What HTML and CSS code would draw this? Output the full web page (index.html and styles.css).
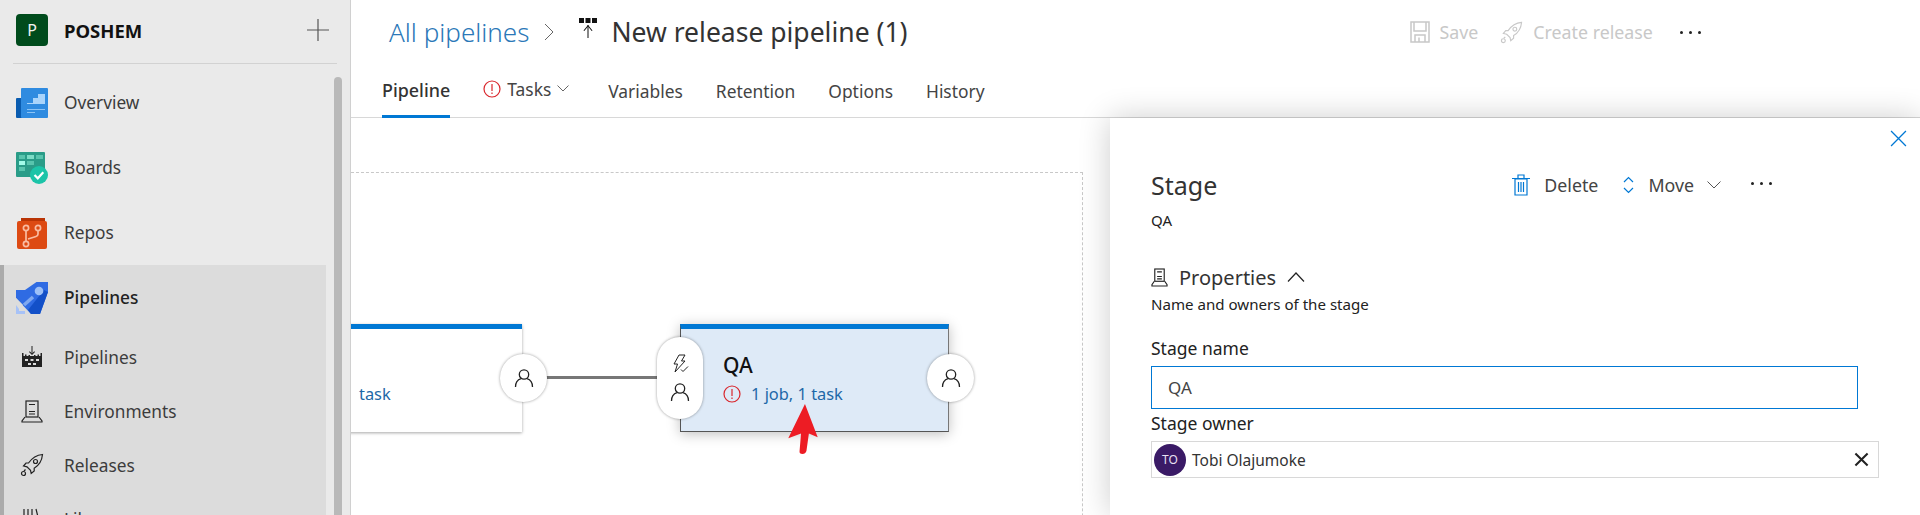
FILE: index.html
```html
<!DOCTYPE html>
<html lang="en">
<head>
<meta charset="utf-8">
<title>New release pipeline (1)</title>
<link rel="stylesheet" href="styles.css">
</head>
<body>
<div class="app">
  <aside class="sidebar">
    <div class="project">
      <span class="project-badge">P</span>
      <span class="project-name">POSHEM</span>
      <svg class="project-add" viewBox="0 0 24 24"><path d="M12 1v22M1 12h22" stroke="#555" stroke-width="1.2" fill="none"/></svg>
    </div>
    <nav class="nav">
      <div class="nav-item">
        <span class="nav-icon">
          <svg viewBox="0 0 32 32" width="32" height="32"><rect x="0" y="11" width="14" height="20" rx="1" fill="#0a5cb0"/><rect x="5" y="1" width="27" height="30" rx="1" fill="#2f8be0"/><path d="M11 16h6v-5h5v-4h7v10H11z" fill="#a9d4fb"/><path d="M11 22h18v1H11zM11 25h8v1h-8z" fill="#8cc4f5"/></svg>
        </span>Overview
      </div>
      <div class="nav-item">
        <span class="nav-icon">
          <svg viewBox="0 0 32 32" width="32" height="32"><rect x="0" y="0" width="29" height="25" rx="1" fill="#2a9c88"/><rect x="3" y="3" width="6" height="4" fill="#58c4ad"/><rect x="11" y="3" width="7" height="4" fill="#7cdcc6"/><rect x="20" y="3" width="7" height="4" fill="#58c4ad"/><rect x="3" y="9" width="6" height="4" fill="#a2fbe8"/><rect x="11" y="9" width="7" height="4" fill="#58c4ad"/><rect x="3" y="15" width="6" height="4" fill="#58c4ad"/><circle cx="23" cy="23" r="9" fill="#1cc4a8"/><path d="M18.5 23l3.3 3.3 5.5-6" stroke="#fff" stroke-width="2.2" fill="none"/></svg>
        </span>Boards
      </div>
      <div class="nav-item">
        <span class="nav-icon">
          <svg viewBox="0 0 32 32" width="32" height="32"><path d="M5 1h24v3H5z" fill="#b93405"/><rect x="1" y="4" width="30" height="28" rx="2" fill="#dd4a13"/><g stroke="#f9bba1" stroke-width="1.7" fill="none"><circle cx="10" cy="11" r="2.6"/><circle cx="22" cy="11" r="2.6"/><circle cx="10" cy="27" r="2.6"/><path d="M10 14v10M22 14v3q0 2-2 2.5l-8 2.5"/></g></svg>
        </span>Repos
      </div>
      <div class="nav-group">
        <div class="nav-item nav-head">
          <span class="nav-icon">
            <svg viewBox="0 0 32 32" width="32" height="32"><path d="M20.500 0H32V10L24 32H15L0 16V8H9z" fill="#2f6be3"/><path d="M32 10L24 32H15L12 28 28 8z" fill="#1350c8"/><circle cx="23" cy="9" r="4.300" fill="#9cc0f7"/><path d="M8 23l9-8" stroke="#7fa8f0" stroke-width="3.500"/><path d="M0 22h3v7h6v3H0z" fill="#a7c2f7"/><path d="M0 16l7 7-4 4-3-4z" fill="#dcdcdc"/></svg>
          </span>Pipelines
        </div>
        <div class="nav-item nav-sub">
          <span class="nav-icon">
            <svg viewBox="0 0 24 24" width="24" height="24"><g fill="#222"><path d="M11.500 1h1v8h-1z"/><path d="M9 7l3 3 3-3-.7-.7L12 8.600 9.700 6.300z"/><path d="M2 8h1.500v3h1.500V9.500h1.500V11H8.500v-1H10v1h4v-1h1.500v1h2V9.500H19V11h1.500V8H22v14H2z"/></g><g fill="#dcdcdc"><rect x="5" y="14" width="3" height="2"/><rect x="10.500" y="14" width="3" height="2"/><rect x="16" y="14" width="3" height="2"/><rect x="8" y="18" width="3" height="2"/><rect x="13" y="18" width="3" height="2"/></g></svg>
          </span>Pipelines
        </div>
        <div class="nav-item nav-sub">
          <span class="nav-icon">
            <svg viewBox="0 0 24 24" width="24" height="24"><g fill="none" stroke="#222" stroke-width="1.200"><rect x="6" y="2" width="12" height="16"/><path d="M9 5.500h6M9 12.500h6M9 15h6"/><path d="M5 18l-3 4v1h20v-1l-3-4"/></g></svg>
          </span>Environments
        </div>
        <div class="nav-item nav-sub">
          <span class="nav-icon">
            <svg viewBox="0 0 24 24" width="24" height="24"><use href="#rocket" stroke="#222"/></svg>
          </span>Releases
        </div>
        <div class="nav-item nav-sub">
          <span class="nav-icon">
            <svg viewBox="0 0 24 24" width="24" height="24"><path d="M4 2v20M8 2v20M12 2v20M16 2l5 20" stroke="#222" stroke-width="1.200" fill="none"/></svg>
          </span>Library
        </div>
      </div>
    </nav>
    <span class="scrollbar"></span>
  </aside>

  <main class="main">
    <header class="topbar">
      <a class="crumb">All pipelines</a>
      <svg class="crumb-sep" viewBox="0 0 10 18"><path d="M1 1l8 8-8 8" stroke="#666" stroke-width="1" fill="none"/></svg>
      <svg class="release-icon" viewBox="0 0 20 20"><g fill="#111"><rect x="1" y="0" width="5" height="5"/><rect x="7.500" y="0" width="5" height="5"/><rect x="14" y="0" width="5" height="5"/><path d="M9.500 7h1v13h-1z"/><path d="M5.500 12.500l4.500-5.500 4.500 5.500-.8.600L10 8.600l-3.700 4.500z"/></g></svg>
      <h1 class="title">New release pipeline (1)</h1>
      <div class="top-actions">
        <span class="top-action">
          <svg viewBox="0 0 20 22" width="20" height="22"><g fill="none" stroke="#c8c8c8" stroke-width="1.500"><path d="M1 1h18v20H1z"/><path d="M4 1v9h12V1M5 21v-7h10v7M9 16.500v4.500"/></g></svg>
          Save
        </span>
        <span class="top-action">
          <svg viewBox="0 0 24 24" width="23" height="23"><use href="#rocket" stroke="#c8c8c8"/></svg>
          Create release
        </span>
        <span class="dots dots-top"><i></i><i></i><i></i></span>
      </div>
    </header>
    <div class="tabs">
      <span class="tab tab-active">Pipeline</span>
      <span class="tab tab-tasks">
        <svg class="err" viewBox="0 0 18 18" width="18" height="18"><use href="#error"/></svg>
        Tasks
        <svg class="tab-chev" viewBox="0 0 12 7" width="12" height="7"><path d="M.5.500L6 6l5.500-5.500" stroke="#666" fill="none"/></svg>
      </span>
      <span class="tab">Variables</span>
      <span class="tab">Retention</span>
      <span class="tab">Options</span>
      <span class="tab">History</span>
    </div>
    <div class="workspace">
      <section class="canvas">
        <div class="canvas-frame"></div>
        <div class="stage stage-dev"><span class="stage-meta">task</span></div>
        <span class="connector"></span>
        <span class="round round-a"><svg viewBox="0 0 20 20" width="20" height="20"><use href="#person"/></svg></span>
        <div class="stage stage-qa">
          <div class="stage-name">QA</div>
          <div class="stage-meta">
            <svg viewBox="0 0 18 18" width="18" height="18"><use href="#error"/></svg>
            1 job, 1 task
          </div>
        </div>
        <span class="pill">
          <svg viewBox="0 0 20 20" width="20" height="20"><path d="M9 1h6l-3.500 6H15L5 18l2.500-8H4z M11 15.500l2 2 5-5" fill="none" stroke="#222" stroke-width="1"/></svg>
          <svg viewBox="0 0 20 20" width="20" height="20"><use href="#person"/></svg>
        </span>
        <span class="round round-b"><svg viewBox="0 0 20 20" width="20" height="20"><use href="#person"/></svg></span>
        <svg class="red-arrow" viewBox="0 0 32 52" width="32" height="52"><path d="M18 0L31 34 22 30 19.500 48q-1 3-4 3-3.500 0-3-3L14 30 1 35z" fill="#ed1c24"/></svg>
      </section>

      <section class="panel">
        <div class="panel-close-row">
          <svg viewBox="0 0 16 16" width="17" height="17"><path d="M1 1l14 14M15 1L1 15" stroke="#0078d4" stroke-width="1.200" fill="none"/></svg>
        </div>
        <div class="panel-head">
          <h2 class="panel-title">Stage</h2>
          <div class="panel-actions">
            <span class="panel-action panel-delete">
              <svg viewBox="0 0 18 22" width="18" height="22"><g fill="none" stroke="#0078d4" stroke-width="1.200"><path d="M3 5h12v16H3zM0 4.500h18M6 4V1h6v3M6.500 8v10M9 8v10M11.500 8v10"/></g></svg>
              Delete
            </span>
            <span class="panel-action">
              <svg viewBox="0 0 11 18" width="11" height="18"><path d="M1 6l4.500-4.500L10 6M1 12l4.500 4.500L10 12" stroke="#0078d4" stroke-width="1.200" fill="none"/></svg>
              Move
              <svg class="move-chev" viewBox="0 0 14 8" width="14" height="8"><path d="M.5.500L7 7l6.500-6.500" stroke="#555" fill="none"/></svg>
            </span>
            <span class="dots dots-panel"><i></i><i></i><i></i></span>
          </div>
        </div>
        <div class="panel-sub">QA</div>
        <div class="section-head">
          <svg viewBox="0 0 18 20" width="17" height="19"><g fill="none" stroke="#222" stroke-width="1.200"><rect x="4" y="1" width="10" height="13"/><path d="M6.500 4h5M6.500 9h5M6.500 11.500h5"/><path d="M3.500 14L1 17.500V19h16v-1.500L14.500 14"/></g></svg>
          <span class="section-title">Properties</span>
          <svg viewBox="0 0 18 10" width="18" height="10"><path d="M1 9.500l8-8.500 8 8.500" stroke="#222" stroke-width="1.200" fill="none"/></svg>
        </div>
        <div class="section-desc">Name and owners of the stage</div>
        <label class="field-label field-name">Stage name</label>
        <div class="text-input">QA</div>
        <label class="field-label">Stage owner</label>
        <div class="owner-box">
          <span class="avatar">TO</span>
          <span class="owner-name">Tobi Olajumoke</span>
          <svg class="owner-x" viewBox="0 0 16 16" width="15" height="15"><path d="M1.500 1.500l13 13M14.500 1.500l-13 13" stroke="#222" stroke-width="2.200" fill="none"/></svg>
        </div>
      </section>
    </div>
  </main>
</div>

<svg class="defs" width="0" height="0">
  <defs>
    <g id="rocket" fill="none" stroke-width="1.200">
      <path d="M22.500 1.500C17 2 12 5 8.500 10L6 10 3.500 13l3.500.8 3.500 3.500.7 3.200 3-2.500v-2.800C19.500 12 22 7 22.500 1.500z"/>
      <circle cx="15.500" cy="8.500" r="2"/>
      <path d="M5.500 16.500L4 18"/>
      <circle cx="3.500" cy="20.500" r="2"/>
    </g>
    <g id="error">
      <circle cx="9" cy="9" r="8" fill="none" stroke="#d9262c" stroke-width="1.200"/>
      <path d="M9 4v7M9 12.500v1.500" stroke="#d9262c" stroke-width="1.200" fill="none"/>
    </g>
    <g id="person" fill="none" stroke="#222" stroke-width="1.300">
      <circle cx="10" cy="6.500" r="4.700"/>
      <path d="M1.500 19c0-5 3-7.500 5.500-8.300M18.500 19c0-5-3-7.500-5.500-8.300"/>
    </g>
  </defs>
</svg>
</body>
</html>
```

FILE: styles.css
```css
* {
  box-sizing: border-box;
}

html,
body {
  margin: 0;
  height: 515px;
  overflow: hidden;
  background: #fff;
}

body {
  font-family: "Noto Sans", "Open Sans", sans-serif;
  color: #333;
}

.app {
  display: flex;
  height: 515px;
}

.defs {
  position: absolute;
}

/* Sidebar */
.sidebar {
  position: relative;
  flex: 0 0 350px;
  height: 515px;
  overflow: hidden;
  background: #eaeaea;
}

.project {
  display: flex;
  align-items: center;
  height: 64px;
  margin: 0 13px;
  padding: 0 7px 4px 3px;
  border-bottom: 1px solid #d2d2d2;
}

.project-badge {
  display: flex;
  align-items: center;
  justify-content: center;
  width: 32px;
  height: 32px;
  border-radius: 4px;
  background: #004b1c;
  color: #f2f2f2;
  font-size: 16px;
}

.project-name {
  flex: 1;
  margin: 2px 0 0 16px;
  color: #111;
  font-size: 18.500px;
  font-weight: 700;
}

.project-add {
  width: 24px;
  height: 24px;
}

.nav {
  display: flex;
  flex-direction: column;
  padding-top: 6px;
}

.nav-item {
  display: flex;
  align-items: center;
  height: 65px;
  padding-left: 16px;
  font-size: 17.300px;
  color: #3c3c3c;
}

.nav-icon {
  display: flex;
  flex: 0 0 32px;
  justify-content: center;
  margin-right: 16px;
}

.nav-group {
  width: 326px;
  height: 300px;
  background: #dcdcdc;
  border-left: 4px solid #ababab;
}

.nav-group .nav-item {
  padding-left: 12px;
}

.nav-head {
  color: #222;
  font-weight: 500;
}

.nav-group .nav-sub {
  height: 54px;
}

.scrollbar {
  position: absolute;
  left: 334px;
  top: 77px;
  width: 8px;
  height: 460px;
  border-radius: 4px;
  background: #b9b9b9;
}

/* Main column */
.main {
  display: flex;
  flex: 1;
  flex-direction: column;
  min-width: 0;
  border-left: 1px solid #d0d0d0;
}

.topbar {
  display: flex;
  align-items: center;
  height: 64px;
  padding-left: 38px;
}

.crumb {
  color: #2b78b8;
  font-size: 26px;
  font-weight: 300;
}

.crumb-sep {
  width: 10px;
  height: 18px;
  margin-left: 15px;
}

.release-icon {
  width: 20px;
  height: 20px;
  margin: -8px 0 0 24px;
}

.title {
  margin: 0 0 0 13px;
  color: #333;
  font-size: 26.500px;
  font-weight: 400;
}

.top-actions {
  display: flex;
  align-items: center;
  margin-left: 502px;
}

.top-action {
  display: flex;
  align-items: center;
  gap: 10px;
  margin-right: 22px;
  color: #c8c8c8;
  font-size: 17.800px;
}

.dots {
  display: flex;
  gap: 6px;
}

.dots i {
  width: 3px;
  height: 3px;
  border-radius: 50%;
  background: #222;
}

.dots-top {
  margin-left: 5px;
}

.tabs {
  display: flex;
  height: 54px;
  padding-left: 31px;
  gap: 33px;
  border-bottom: 1px solid #d8d8d8;
}

.tab {
  display: flex;
  align-items: center;
  height: 54px;
  padding-bottom: 0;
  color: #444;
  font-size: 17.400px;
}

.tab-active {
  border-bottom: 3px solid #0078d4;
  color: #333;
  font-size: 17.900px;
  font-weight: 500;
}

.tab-tasks {
  gap: 6px;
  margin-right: 6px;
  padding-bottom: 5px;
}

.err {
  flex: none;
}

/* Canvas */
.workspace {
  display: flex;
  flex: 1;
  min-height: 0;
}

.canvas {
  position: relative;
  flex: 0 0 759px;
  overflow: hidden;
}

.canvas-frame {
  position: absolute;
  left: -10px;
  top: 54px;
  width: 742px;
  height: 500px;
  border: 1px dashed #c8c8c8;
}

.stage {
  position: absolute;
  top: 206px;
  height: 108px;
  border-top: 5px solid #0078d4;
}

.stage-dev {
  left: -10px;
  width: 181px;
  background: #fff;
  box-shadow: 0 1px 3px rgba(0, 0, 0, 0.35);
}

.stage-dev .stage-meta {
  position: absolute;
  left: 18px;
  top: 53px;
  margin: 0;
}

.stage-qa {
  left: 329px;
  width: 269px;
  padding: 22px 0 0 42px;
  background: #deeaf7;
  border-left: 1px solid #555;
  border-right: 1px solid #777;
  border-bottom: 1px solid #555;
  box-shadow: 0 2px 12px rgba(0, 0, 0, 0.25);
}

.stage-name {
  color: #111;
  font-size: 21px;
  font-weight: 500;
  line-height: 28px;
}

.stage-meta {
  display: flex;
  align-items: center;
  gap: 10px;
  margin-top: 3px;
  color: #1d68a8;
  font-size: 16.400px;
}

.connector {
  position: absolute;
  left: 190px;
  top: 258px;
  width: 120px;
  height: 3px;
  background: #777;
}

.round,
.pill {
  position: absolute;
  display: flex;
  align-items: center;
  justify-content: center;
  background: #fff;
  box-shadow: 0 0 3px rgba(0, 0, 0, 0.4);
}

.round {
  top: 236px;
  width: 47px;
  height: 48px;
  border-radius: 50%;
}

.round-a {
  left: 149px;
}

.round-b {
  left: 576px;
}

.pill {
  left: 306px;
  top: 219px;
  flex-direction: column;
  gap: 8px;
  width: 46px;
  height: 82px;
  border-radius: 23px;
}

.red-arrow {
  position: absolute;
  left: 436px;
  top: 286px;
  width: 32px;
  height: 51px;
}

/* Panel */
.panel {
  position: relative;
  z-index: 2;
  flex: 1;
  padding-left: 41px;
  background: #fff;
  box-shadow: 0 0 30px rgba(0, 0, 0, 0.2);
}

.panel-close-row {
  display: flex;
  justify-content: flex-end;
  height: 47px;
  padding: 12px 13px 0 0;
}

.panel-head {
  display: flex;
  align-items: center;
  justify-content: space-between;
  width: 621px;
  height: 40px;
}

.panel-title {
  margin: 0;
  color: #333;
  font-size: 25px;
  font-weight: 400;
}

.panel-actions {
  display: flex;
  align-items: center;
  gap: 22px;
}

.panel-action {
  display: flex;
  align-items: center;
  gap: 14px;
  color: #444;
  font-size: 17.800px;
}

.panel-delete {
  margin-right: 3px;
}

.move-chev {
  margin-left: -1px;
}

.dots-panel {
  margin-left: 8px;
  margin-bottom: 4px;
}

.panel-sub {
  height: 20px;
  margin-top: 5px;
  color: #222;
  font-size: 15px;
  line-height: 20px;
}

.section-head {
  display: flex;
  align-items: center;
  gap: 11px;
  height: 28px;
  margin-top: 33px;
}

.section-title {
  color: #333;
  font-size: 20px;
}

.section-desc {
  height: 20px;
  margin-top: 3px;
  color: #222;
  font-size: 15.100px;
  line-height: 20px;
}

.field-label {
  display: block;
  height: 24px;
  color: #222;
  font-size: 17.500px;
  line-height: 24px;
}

.field-name {
  margin-top: 22px;
}

.text-input {
  display: flex;
  align-items: center;
  width: 707px;
  height: 43px;
  margin: 6px 0 2px;
  padding-left: 16px;
  border: 1px solid #0078d4;
  color: #444;
  font-size: 17px;
}

.owner-box {
  display: flex;
  align-items: center;
  width: 728px;
  height: 37px;
  margin-top: 6px;
  padding: 0 9px 0 2px;
  border: 1px solid #d8d8d8;
}

.avatar {
  display: flex;
  align-items: center;
  justify-content: center;
  width: 32px;
  height: 32px;
  border-radius: 50%;
  background: #3a1a66;
  color: #e8e0f2;
  font-size: 12px;
}

.owner-name {
  flex: 1;
  margin-left: 6px;
  color: #333;
  font-size: 15.500px;
}
```
